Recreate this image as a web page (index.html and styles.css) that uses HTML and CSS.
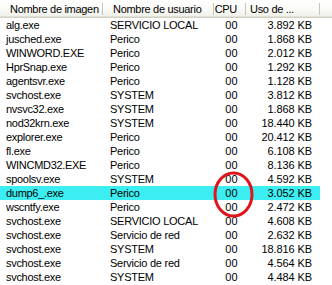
FILE: index.html
```html
<!DOCTYPE html>
<html lang="es">
<head>
<meta charset="utf-8">
<link rel="stylesheet" href="styles.css">
<title>Procesos</title>
</head>
<body>
<div class="list">
  <div class="head">
    <div class="hc c1">Nombre de imagen</div>
    <div class="hc c2">Nombre de usuario</div>
    <div class="hc c3">CPU</div>
    <div class="hc c4">Uso de ...</div>
    <div class="hc c5"></div>
  </div>
  <div class="rows">
    <div class="row"><span class="c1">alg.exe</span><span class="c2">SERVICIO LOCAL</span><span class="c3">00</span><span class="c4">3.892 KB</span></div>
    <div class="row"><span class="c1">jusched.exe</span><span class="c2">Perico</span><span class="c3">00</span><span class="c4">1.868 KB</span></div>
    <div class="row"><span class="c1">WINWORD.EXE</span><span class="c2">Perico</span><span class="c3">00</span><span class="c4">2.012 KB</span></div>
    <div class="row"><span class="c1">HprSnap.exe</span><span class="c2">Perico</span><span class="c3">00</span><span class="c4">1.292 KB</span></div>
    <div class="row"><span class="c1">agentsvr.exe</span><span class="c2">Perico</span><span class="c3">00</span><span class="c4">1.128 KB</span></div>
    <div class="row"><span class="c1">svchost.exe</span><span class="c2">SYSTEM</span><span class="c3">00</span><span class="c4">3.812 KB</span></div>
    <div class="row"><span class="c1">nvsvc32.exe</span><span class="c2">SYSTEM</span><span class="c3">00</span><span class="c4">1.868 KB</span></div>
    <div class="row"><span class="c1">nod32krn.exe</span><span class="c2">SYSTEM</span><span class="c3">00</span><span class="c4">18.440 KB</span></div>
    <div class="row"><span class="c1">explorer.exe</span><span class="c2">Perico</span><span class="c3">00</span><span class="c4">20.412 KB</span></div>
    <div class="row"><span class="c1">fl.exe</span><span class="c2">Perico</span><span class="c3">00</span><span class="c4">6.108 KB</span></div>
    <div class="row"><span class="c1">WINCMD32.EXE</span><span class="c2">Perico</span><span class="c3">00</span><span class="c4">8.136 KB</span></div>
    <div class="row"><span class="c1">spoolsv.exe</span><span class="c2">SYSTEM</span><span class="c3">00</span><span class="c4">4.592 KB</span></div>
    <div class="row sel"><span class="c1">dump6_.exe</span><span class="c2">Perico</span><span class="c3">00</span><span class="c4">3.052 KB</span></div>
    <div class="row"><span class="c1">wscntfy.exe</span><span class="c2">Perico</span><span class="c3">00</span><span class="c4">2.472 KB</span></div>
    <div class="row"><span class="c1">svchost.exe</span><span class="c2">SERVICIO LOCAL</span><span class="c3">00</span><span class="c4">4.608 KB</span></div>
    <div class="row"><span class="c1">svchost.exe</span><span class="c2">Servicio de red</span><span class="c3">00</span><span class="c4">2.632 KB</span></div>
    <div class="row"><span class="c1">svchost.exe</span><span class="c2">SYSTEM</span><span class="c3">00</span><span class="c4">18.816 KB</span></div>
    <div class="row"><span class="c1">svchost.exe</span><span class="c2">Servicio de red</span><span class="c3">00</span><span class="c4">4.564 KB</span></div>
    <div class="row"><span class="c1">svchost.exe</span><span class="c2">SYSTEM</span><span class="c3">00</span><span class="c4">4.484 KB</span></div>
  </div>
  <svg class="mark" width="46" height="50" viewBox="0 0 46 50" aria-hidden="true">
    <ellipse cx="22.5" cy="24.5" rx="18.5" ry="21.5" fill="none" stroke="#e0141a" stroke-width="3"/>
  </svg>
</div>
</body>
</html>
```

FILE: styles.css
```css
html, body {
  margin: 0;
  padding: 0;
  background: #ffffff;
}

body {
  width: 332px;
  height: 285px;
  overflow: hidden;
  font-family: "Liberation Sans", Arial, sans-serif;
  font-size: 11px;
  color: #000000;
}

.list {
  position: relative;
  width: 332px;
}

.head {
  display: grid;
  grid-template-columns: 103px 111px 32px 74px 12px;
  height: 18px;
  background: linear-gradient(#ffffff 0%, #fbfbf8 45%, #efefe8 100%);
  box-shadow: inset 0 -1px 0 #d2d0c4, inset 0 -2px 0 #e2e0d4;
}

.hc {
  position: relative;
  line-height: 18px;
  white-space: nowrap;
  overflow: hidden;
  letter-spacing: -0.3px;
}

.hc::after {
  content: "";
  position: absolute;
  right: 0;
  top: 3px;
  bottom: 3px;
  width: 1px;
  background: #c7c5b8;
  box-shadow: 1px 0 0 #ffffff;
}

.hc.c5::after {
  display: none;
}

.hc.c1 { padding-left: 10px; }
.hc.c2 { padding-left: 10px; }
.hc.c3 { text-align: right; padding-right: 9px; }
.hc.c4 { padding-left: 4px; }

.rows {
  display: flex;
  flex-direction: column;
}

.row {
  display: grid;
  grid-template-columns: 103px 111px 32px 74px;
  width: 320px;
  height: 14px;
  line-height: 15px;
  white-space: nowrap;
}

.row.sel {
  background: #3ceef2;
}

.row span {
  overflow: hidden;
}

.row .c1 {
  padding-left: 6px;
  letter-spacing: -0.3px;
}

.row .c2 {
  padding-left: 7px;
  letter-spacing: -0.25px;
}

.row .c3 {
  text-align: right;
  padding-right: 8px;
  letter-spacing: 0.3px;
}

.row .c4 {
  text-align: right;
  padding-right: 8px;
  letter-spacing: -0.1px;
}

.mark {
  position: absolute;
  left: 211px;
  top: 170px;
}
```
